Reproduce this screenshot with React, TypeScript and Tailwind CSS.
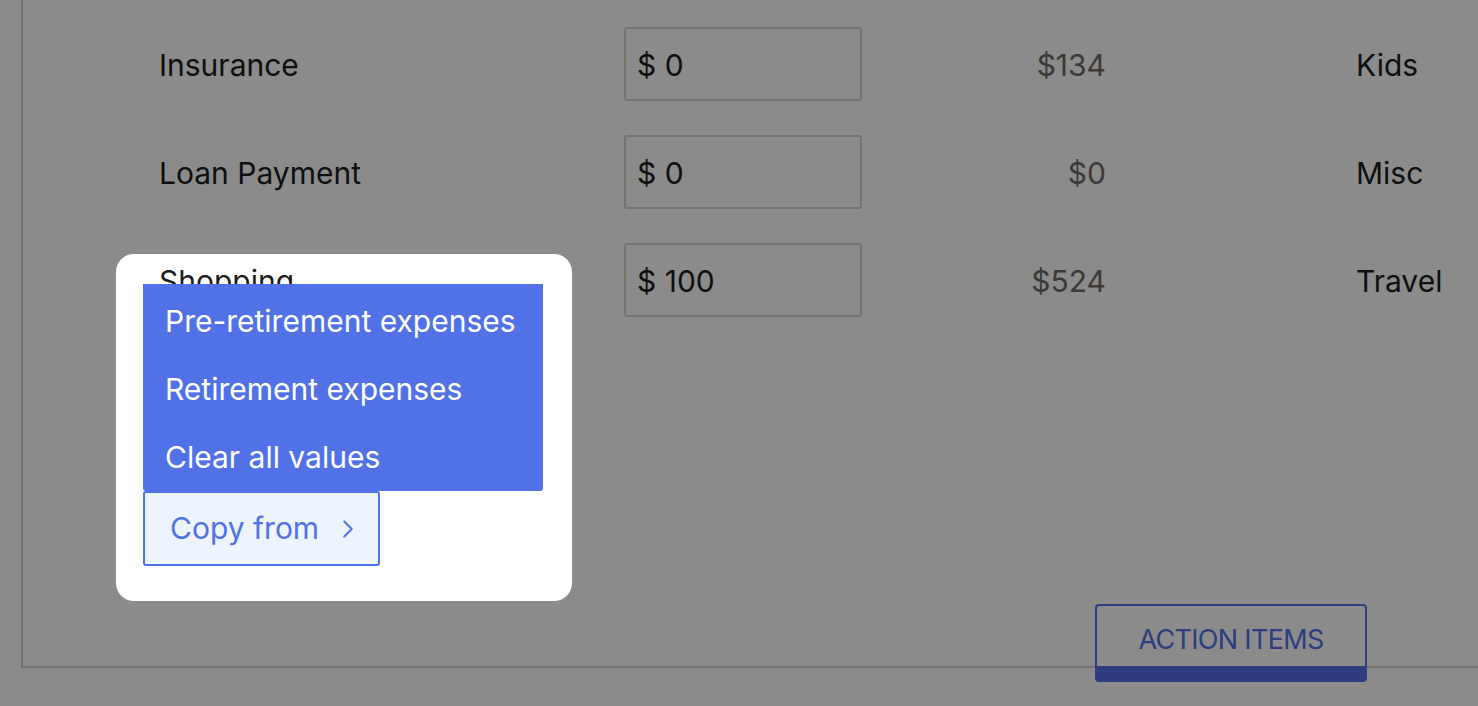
import React from 'react';
import { ChevronRight } from 'lucide-react';

const rows = [
  { label: 'Insurance', value: '$ 0', spent: '$134', category: 'Kids' },
  { label: 'Loan Payment', value: '$ 0', spent: '$0', category: 'Misc' },
  { label: 'Shopping', value: '$ 100', spent: '$524', category: 'Travel' },
];

const menuItems = ['Pre-retirement expenses', 'Retirement expenses', 'Clear all values'];

export default function App() {
  return (
    <div className="relative h-[706px] w-full overflow-hidden bg-white font-['Inter','Noto_Sans',sans-serif] text-[30px] text-[#1c1c1c]">
      <div className="ml-[21px] h-[668px] border-b-2 border-l-2 border-[#dad3c8] pl-[136px] pt-[27px]">
        <div className="flex flex-col gap-[34px]">
          {rows.map((r) => (
            <div key={r.label} className="flex h-[74px] items-center">
              <div className="w-[465px] pt-[2px]">{r.label}</div>
              <div className="flex h-[74px] w-[238px] items-center rounded-[3px] border-2 border-[#dad3c8] px-[11px] pt-[2px]">
                {r.value}
              </div>
              <div className="w-[244px] pt-[2px] text-right text-[#716b64]">{r.spent}</div>
              <div className="ml-[250px] pt-[2px]">{r.category}</div>
            </div>
          ))}
        </div>

        <div className="relative ml-[-16px] mt-[174px] w-fit">
          <div className="absolute bottom-full left-0 w-[400px] rounded-b-[3px] bg-[#5172e6] pt-[3px] text-white">
            {menuItems.map((item) => (
              <div key={item} className="flex h-[68px] items-center px-[22px]">
                {item}
              </div>
            ))}
          </div>
          <button className="flex h-[75px] w-[237px] items-center gap-[14px] rounded-[3px] border-2 border-[#5172e6] bg-[#eef4fe] pl-[25px] text-[#5172e6]">
            <span>Copy from</span>
            <ChevronRight className="h-[30px] w-[30px]" strokeWidth={1.6} />
          </button>
        </div>

        <div className="mt-[38px] flex justify-end pr-[111px]">
          <button className="h-[78px] w-[272px] rounded-[4px] border-2 border-b-[16px] border-[#5370e9] bg-white pt-[8px] text-[27px] tracking-tight text-[#5370e9]">
            ACTION ITEMS
          </button>
        </div>
      </div>

      <div className="pointer-events-none absolute left-[116px] top-[254px] h-[347px] w-[456px] rounded-[18px] shadow-[0_0_0_3000px_rgba(0,0,0,0.455)]" />
    </div>
  );
}
